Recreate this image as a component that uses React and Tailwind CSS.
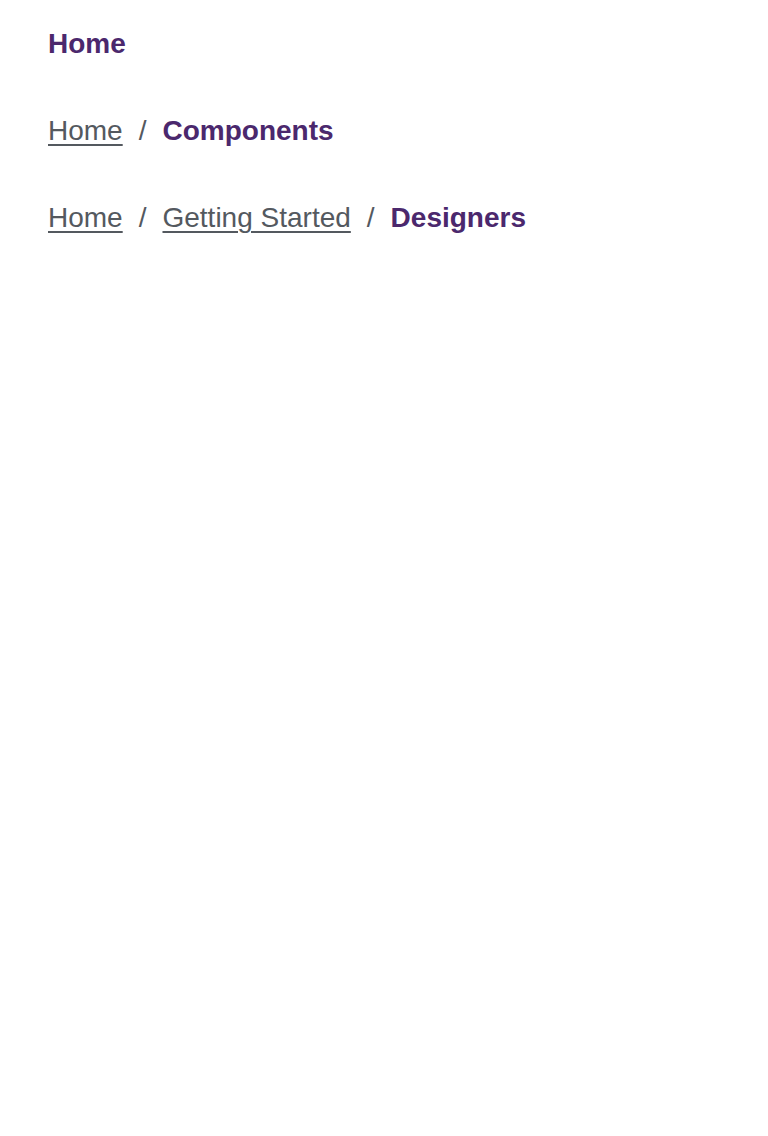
import React from 'react';

const crumbs = [
  [{ label: 'Home' }],
  [{ label: 'Home', href: '#' }, { label: 'Components' }],
  [{ label: 'Home', href: '#' }, { label: 'Getting Started', href: '#' }, { label: 'Designers' }],
];

const Breadcrumb = ({ items }) => (
  <nav>
    <ol className="flex items-center">
      {items.map((item, i) => (
        <li key={i} className="flex items-center">
          {i > 0 && <span className="mx-4 text-[#54595f]">/</span>}
          {item.href ? (
            <a
              href={item.href}
              className="text-[#54595f] underline decoration-2 underline-offset-[4px]"
            >
              {item.label}
            </a>
          ) : (
            <span className="font-bold text-[#4b286d]">{item.label}</span>
          )}
        </li>
      ))}
    </ol>
  </nav>
);

export default function App() {
  return (
    <div
      className="min-h-screen bg-white px-12 pt-[23px] text-[28px] leading-[42px]"
      style={{ fontFamily: '"Liberation Sans", Arial, sans-serif' }}
    >
      <div className="flex flex-col gap-[45px]">
        {crumbs.map((items, i) => (
          <Breadcrumb key={i} items={items} />
        ))}
      </div>
    </div>
  );
}
